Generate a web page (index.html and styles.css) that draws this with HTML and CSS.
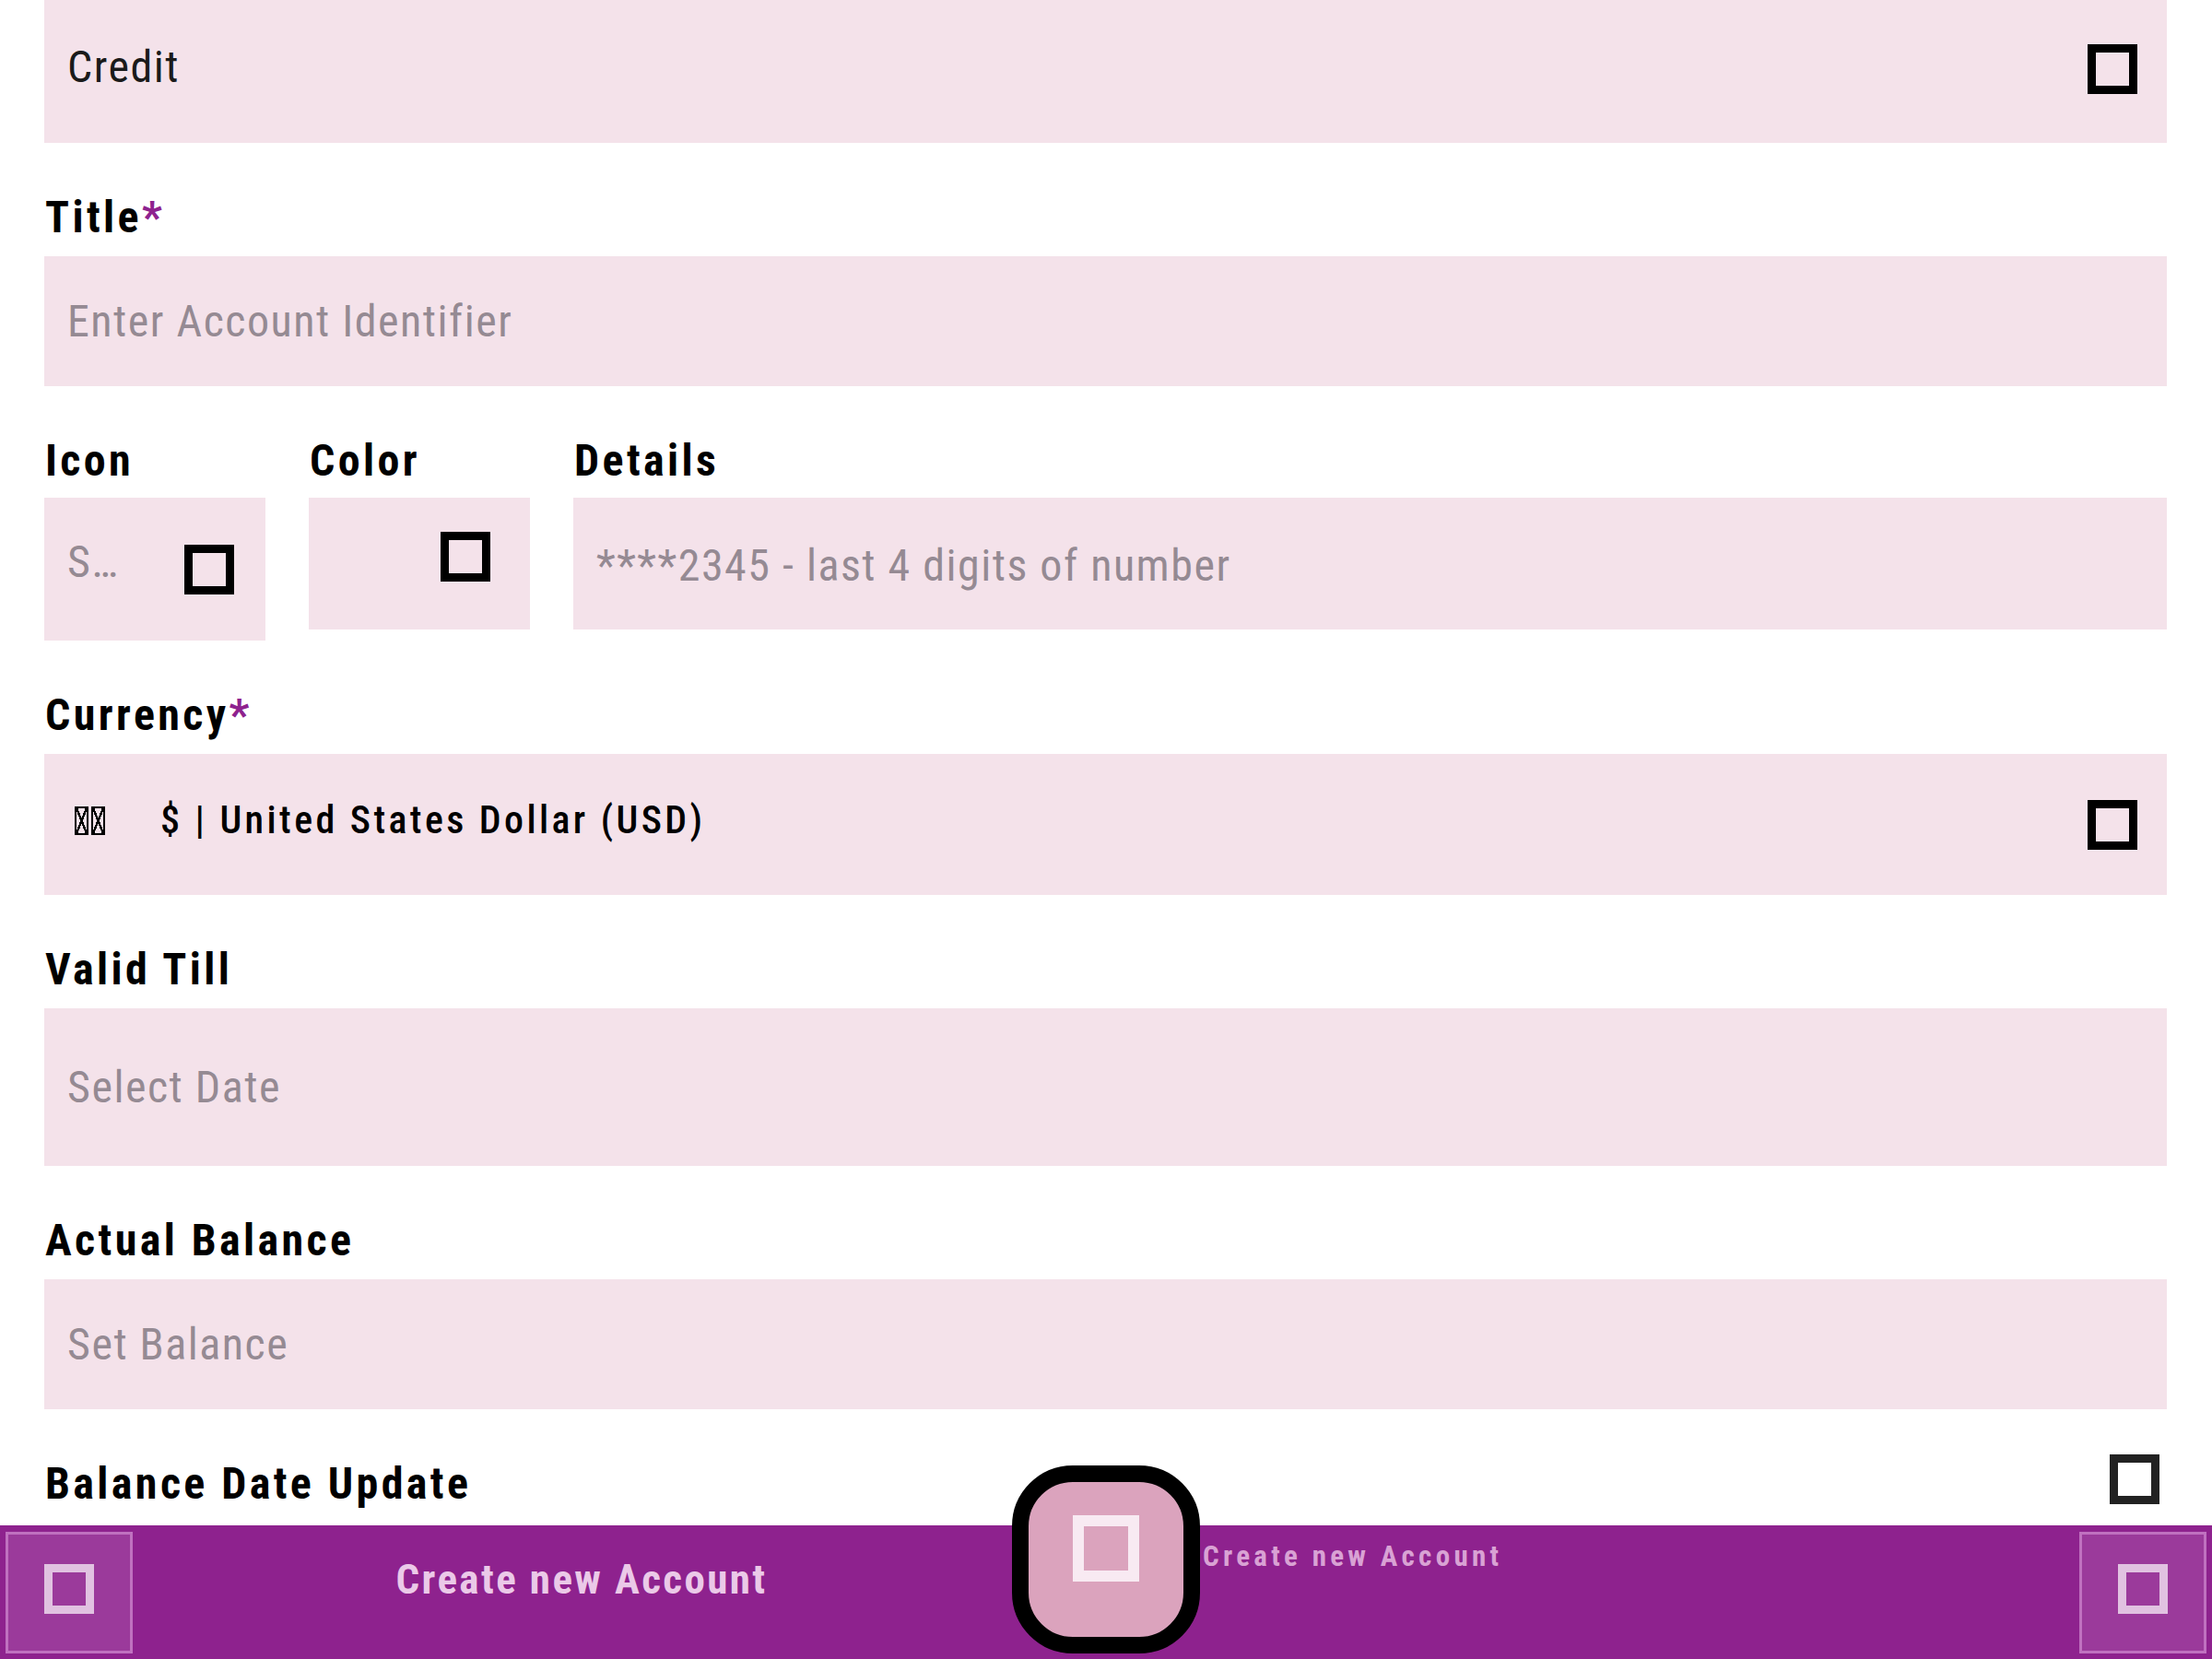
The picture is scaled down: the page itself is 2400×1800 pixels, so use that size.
FILE: index.html
```html
<!DOCTYPE html>
<html lang="en">
<head>
<meta charset="utf-8">
<title>Create new Account</title>
<link rel="stylesheet" href="styles.css">
</head>
<body>
<main class="form">
  <div class="field field-credit">
    <span class="value">Credit</span>
    <span class="box"></span>
  </div>

  <div class="group">
    <div class="label">Title<span class="req">*</span></div>
    <div class="field field-text"><span class="ph">Enter Account Identifier</span></div>
  </div>

  <div class="group row3">
    <div class="col col-icon">
      <div class="label">Icon</div>
      <div class="field field-icon"><span class="ph">S…</span><span class="box"></span></div>
    </div>
    <div class="col col-color">
      <div class="label">Color</div>
      <div class="field field-color"><span class="box box-color"></span></div>
    </div>
    <div class="col col-details">
      <div class="label">Details</div>
      <div class="field field-details"><span class="ph">****2345 - last 4 digits of number</span></div>
    </div>
  </div>

  <div class="group">
    <div class="label">Currency<span class="req">*</span></div>
    <div class="field field-currency">
      <span class="flag" aria-label="US flag"><i></i><i></i></span>
      <span class="cur">$ | United States Dollar (USD)</span>
      <span class="box"></span>
    </div>
  </div>

  <div class="group">
    <div class="label">Valid Till</div>
    <div class="field field-date"><span class="ph">Select Date</span></div>
  </div>

  <div class="group">
    <div class="label">Actual Balance</div>
    <div class="field field-text"><span class="ph">Set Balance</span></div>
  </div>

  <div class="group group-last">
    <div class="label">Balance Date Update</div>
    <span class="box box-dark"></span>
  </div>
</main>

<nav class="bar">
  <div class="bar-btn"><span class="box box-light"></span></div>
  <div class="bar-title">Create new Account</div>
  <div class="fab"><span class="box box-fab"></span></div>
  <div class="bar-right"><span class="fab-label">Create new Account</span></div>
  <div class="bar-btn"><span class="box box-light"></span></div>
</nav>
</body>
</html>
```

FILE: styles.css
```css
* { box-sizing: border-box; }

html, body {
  margin: 0;
  padding: 0;
  background: #ffffff;
}

body {
  width: 2400px;
  height: 1800px;
  overflow: hidden;
  font-family: Roboto, "Noto Sans", "Liberation Sans", sans-serif;
  font-stretch: 85%;
  color: #000;
}

.form {
  padding: 0 49px 0 48px;
  display: flex;
  flex-direction: column;
}

.group {
  margin-top: 53px;
  display: flex;
  flex-direction: column;
  gap: 14px;
}

.label {
  font-size: 48px;
  line-height: 56px;
  font-weight: 700;
  letter-spacing: 3.4px;
  padding-left: 1px;
  color: #000;
}

.req { color: #8e228e; }

.field {
  background: #f4e2ea;
  display: flex;
  align-items: center;
  padding: 0 32px 0 25px;
  font-size: 48px;
}

.value {
  flex: 1;
  color: #1a1a1a;
  letter-spacing: 1.5px;
  margin-top: -10px;
}

.ph {
  flex: 1;
  color: #958a93;
  letter-spacing: 1.5px;
  white-space: nowrap;
  overflow: hidden;
}

.box {
  display: block;
  flex: none;
  width: 54px;
  height: 54px;
  border: 9px solid #000;
}

.field-credit { height: 155px; }
.field-credit .box { margin-top: -6px; }
.field-text { height: 141px; }
.field-date { height: 171px; }

.row3 {
  flex-direction: row;
  gap: 47px;
  align-items: flex-start;
}

.col {
  display: flex;
  flex-direction: column;
  gap: 12px;
}

.col-icon, .col-color { width: 240px; flex: none; }
.col-details { flex: 1; }

.field-icon { height: 155px; padding-right: 34px; }
.field-icon .ph { margin-top: -16px; }
.field-color { height: 143px; justify-content: flex-end; padding-right: 43px; }
.box-color { margin-top: -16px; }
.field-details { height: 143px; }
.field-details .ph { margin-top: 4px; }

.field-currency { height: 153px; padding-left: 33px; }
.flag { display: flex; gap: 3px; margin-right: 60px; margin-top: -8px; }
.flag i {
  display: block;
  width: 15px;
  height: 31px;
  border: 2px solid #000;
  background:
    linear-gradient(to bottom right, transparent 44%, #000 44%, #000 56%, transparent 56%),
    linear-gradient(to bottom left, transparent 44%, #000 44%, #000 56%, transparent 56%);
}
.cur {
  flex: 1;
  font-size: 42px;
  font-weight: 500;
  letter-spacing: 3.4px;
  color: #000;
  margin-top: -10px;
}

.group-last {
  flex-direction: row;
  justify-content: space-between;
  align-items: flex-start;
}
.box-dark { border-color: #222; margin-top: -4px; margin-right: 8px; }

/* bottom bar */
.bar {
  position: fixed;
  left: 0;
  right: 0;
  bottom: 0;
  height: 145px;
  background: #8e228e;
  padding: 7px 6px 12px;
  display: grid;
  grid-template-columns: 138px 1fr 204px 1fr 138px;
  align-items: stretch;
}

.bar-btn {
  background: #9b3a9b;
  border: 3px solid #c071c0;
  display: flex;
  align-items: center;
  justify-content: center;
}

.box-light { border-color: #e1c2e1; margin-top: -8px; }

.bar-title {
  align-self: start;
  padding-top: 25px;
  text-align: center;
  font-size: 45px;
  font-weight: 700;
  letter-spacing: 2.4px;
  color: #ebc9e8;
  padding-left: 20px;
}

.fab {
  align-self: start;
  margin-top: -72px;
  width: 204px;
  height: 204px;
  border: 18px solid #000;
  border-radius: 66px;
  background: #dba3bd;
  display: flex;
  align-items: center;
  justify-content: center;
}

.box-fab {
  width: 72px;
  height: 72px;
  border: 12px solid #f8eaf2;
  margin-top: -24px;
}

.bar-right {
  align-self: start;
  padding: 8px 0 0 3px;
}

.fab-label {
  font-size: 31px;
  font-weight: 700;
  letter-spacing: 4.3px;
  color: #d9a2d4;
}
```
